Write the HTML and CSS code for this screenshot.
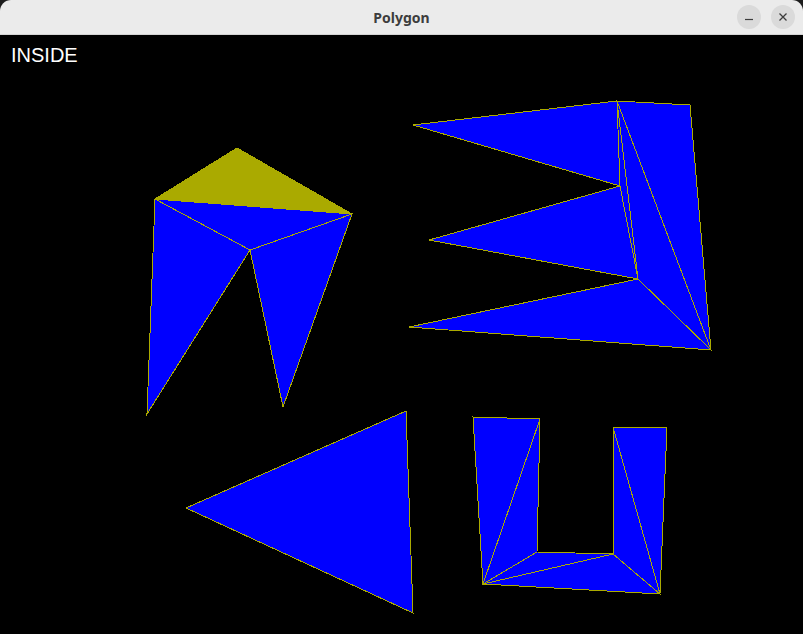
FILE: index.html
```html
<!DOCTYPE html>
<html>
<head>
<meta charset="utf-8">
<title>Polygon</title>
<link rel="stylesheet" href="styles.css">
</head>
<body>
<div class="window">
  <div class="titlebar">
    <span class="title">Polygon</span>
    <div class="controls">
      <button class="ctl" aria-label="Minimize">
        <svg width="10" height="10" viewBox="0 0 10 10"><path d="M1 7.5h8" stroke="#3c3c3c" stroke-width="1.2"/></svg>
      </button>
      <button class="ctl" aria-label="Close">
        <svg width="10" height="10" viewBox="0 0 10 10"><path d="M1.5 1.5l7 7M8.5 1.5l-7 7" stroke="#3c3c3c" stroke-width="1.3"/></svg>
      </button>
    </div>
  </div>
  <div class="canvas">
    <svg class="drawing" viewBox="0 35 803 599" width="803" height="599">
      <g class="tri" stroke="#aaaa00" stroke-width="1" fill="#0000ff">
        <!-- kite -->
        <polygon points="155,199 352,214 250,250"/>
        <polygon points="155,199 250,250 147,414"/>
        <polygon points="250,250 352,214 283,407"/>
        <polygon points="237,148 155,199 352,214" fill="#aaaa00"/>
        <!-- E shape -->
        <polygon points="413,125 617,101 620,186"/>
        <polygon points="617,101 620,186 638,279"/>
        <polygon points="620,186 429,240 638,279"/>
        <polygon points="638,279 409,327 711,350"/>
        <polygon points="617,101 638,279 711,350"/>
        <polygon points="617,101 711,350 690,105"/>
        <!-- triangle -->
        <polygon points="186,508 406,411 413,613"/>
        <!-- U shape -->
        <polygon points="473,417 540,419 483,584"/>
        <polygon points="540,419 537,552 483,584"/>
        <polygon points="537,552 613,554 483,584"/>
        <polygon points="613,554 660,594 483,584"/>
        <polygon points="613,427 660,594 613,554"/>
        <polygon points="613,427 667,427 660,594"/>
      </g>
    </svg>
    <div class="label">INSIDE</div>
  </div>
</div>
</body>
</html>
```

FILE: styles.css
```css
html, body {
  margin: 0;
  padding: 0;
  width: 803px;
  height: 634px;
  overflow: hidden;
  background: #1c1c1c;
}

.window {
  width: 803px;
  height: 634px;
  display: flex;
  flex-direction: column;
  border-radius: 11px 11px 0 0;
  overflow: hidden;
  background: #000;
}

.titlebar {
  height: 34px;
  flex: 0 0 34px;
  background: #ebebeb;
  border-bottom: 1px solid #d4d4d4;
  display: flex;
  align-items: center;
  justify-content: center;
  position: relative;
}

.title {
  font-family: "Noto Sans", "DejaVu Sans", sans-serif;
  font-weight: 700;
  font-size: 14px;
  color: #3d3d3d;
  margin-top: 1px;
}

.controls {
  position: absolute;
  right: 8px;
  top: 5px;
  display: flex;
  gap: 10px;
}

.ctl {
  width: 24px;
  height: 24px;
  border-radius: 50%;
  border: none;
  padding: 0;
  background: #dadada;
  display: flex;
  align-items: center;
  justify-content: center;
}

.canvas {
  flex: 1;
  position: relative;
  background: #000;
}

.drawing {
  position: absolute;
  left: 0;
  top: 0;
  display: block;
}

.tri {
  shape-rendering: crispEdges;
}

.label {
  position: relative;
  padding: 9px 0 0 11px;
  font-family: "Liberation Sans", Arial, sans-serif;
  font-size: 20px;
  line-height: 23px;
  color: #ffffff;
}
```
